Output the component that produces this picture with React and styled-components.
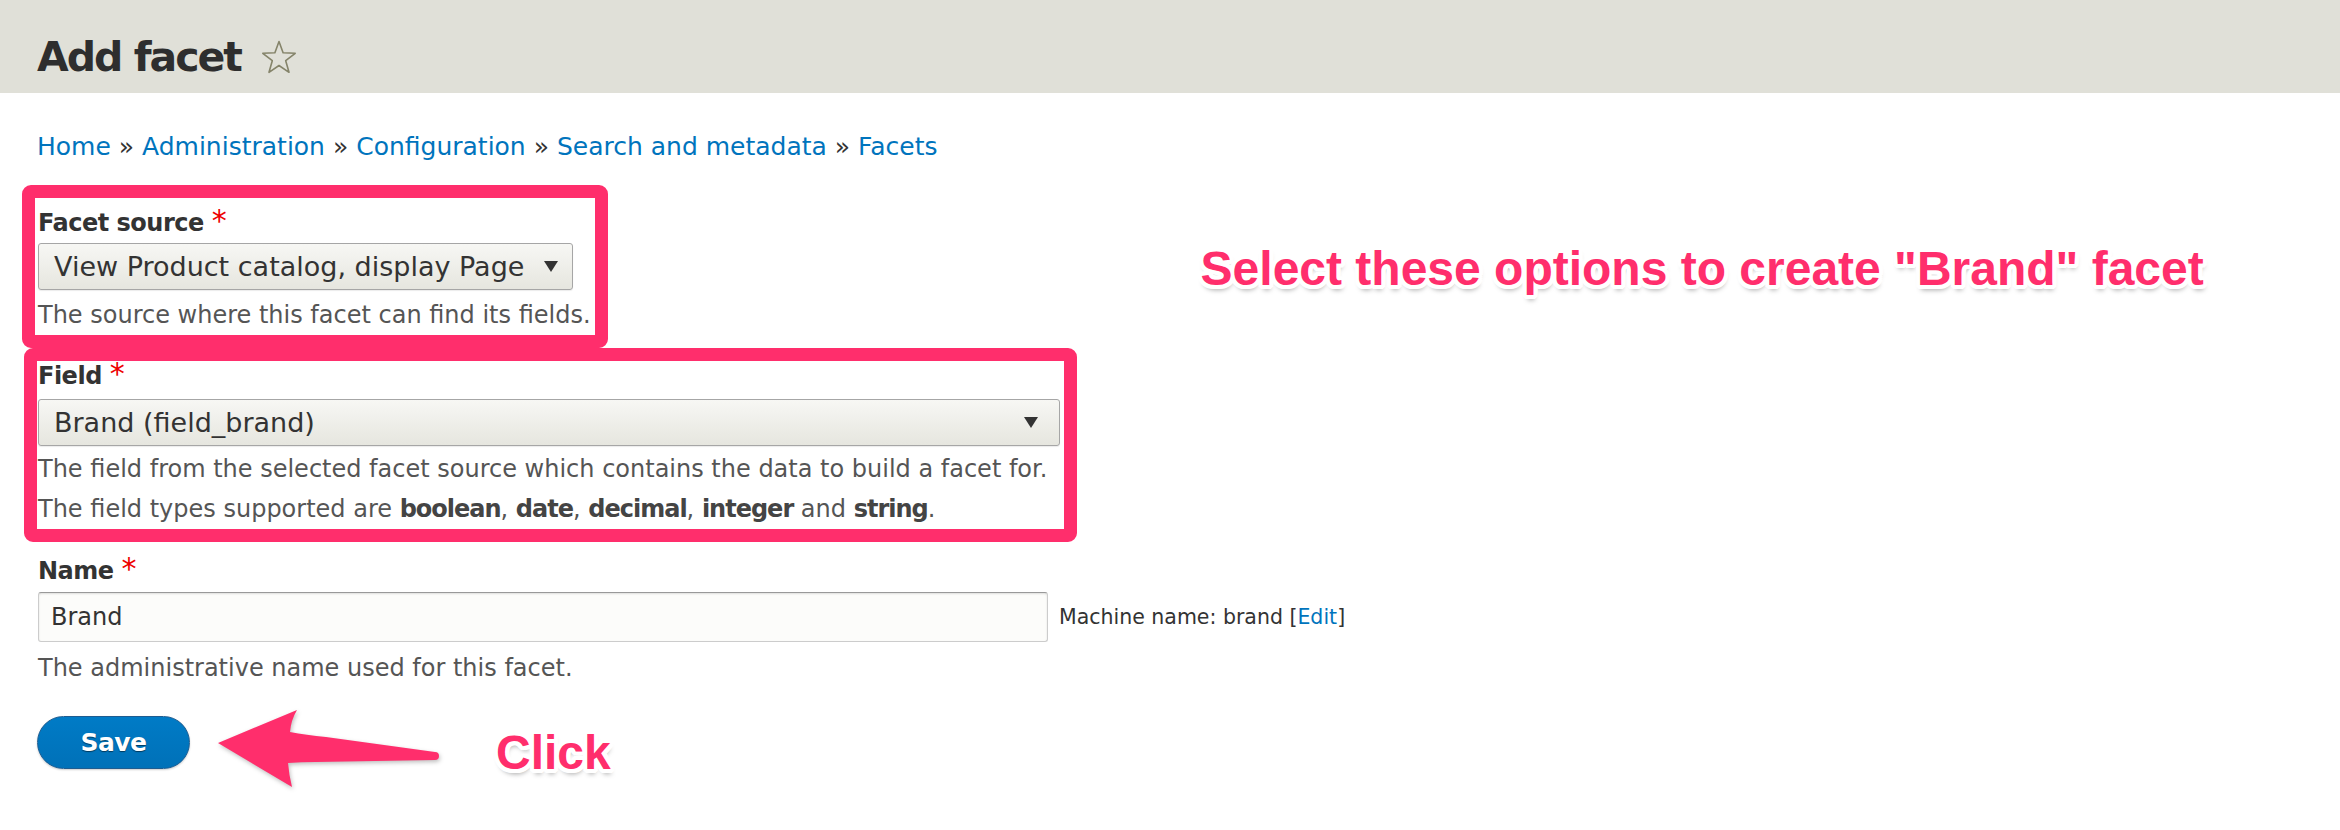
import React from "react";
import styled, { createGlobalStyle } from "styled-components";

const GlobalStyle = createGlobalStyle`
  html, body {
    margin: 0;
    padding: 0;
    background: #fff;
  }
  body {
    font-family: "DejaVu Sans", "Lucida Grande", sans-serif;
    font-size: 24px;
    color: #333;
    width: 2340px;
    height: 830px;
    overflow: hidden;
  }
`;

const PINK = "#ff2e6c";

const PageHeader = styled.header`
  height: 93px;
  box-sizing: border-box;
  padding: 20px 0 0 37px;
  background: #e0e0d8;
  display: flex;
  align-items: center;
  gap: 20px;
`;

const Title = styled.h1`
  margin: 0;
  font-size: 41px;
  line-height: 46px;
  font-weight: bold;
  letter-spacing: -2px;
  color: #2e2e2e;
`;

const Main = styled.main`
  padding-left: 22px;
`;

const Breadcrumb = styled.nav`
  margin: 34px 0 18px 15px;
  font-size: 25px;
  line-height: 40px;
  color: #333;

  a {
    color: #0074bd;
    text-decoration: none;
  }
`;

const TopRow = styled.div`
  display: flex;
  align-items: flex-start;
`;

const Highlight = styled.div`
  width: fit-content;
  border: 13px solid ${PINK};
  border-radius: 9px;
  padding: ${(p) => p.$pad};
  margin-left: ${(p) => p.$offset || 0}px;
`;

const Label = styled.label`
  display: block;
  font-weight: bold;
  line-height: 30px;
  letter-spacing: -0.5px;
  color: #333;
`;

const Required = styled.span`
  color: #e00;
  margin-left: 8px;
  font-size: 30px;
  font-weight: normal;
  letter-spacing: 0;
  vertical-align: top;
  line-height: 26px;
`;

const Select = styled.div`
  display: flex;
  align-items: center;
  justify-content: space-between;
  box-sizing: border-box;
  width: ${(p) => (p.$width ? `${p.$width}px` : "fit-content")};
  height: ${(p) => p.$height}px;
  margin-top: ${(p) => p.$gap}px;
  padding: 0 ${(p) => p.$right}px 0 15px;
  border: 1px solid #a6a6a6;
  border-radius: 3px;
  background: linear-gradient(#f7f7f4, #e6e6df);
  box-shadow: 0 1px 1px rgba(0, 0, 0, 0.08);
  font-size: 27px;
  color: #333;
  white-space: nowrap;
`;

const Caret = styled.span`
  width: 0;
  height: 0;
  margin-left: 20px;
  border-left: 7px solid transparent;
  border-right: 7px solid transparent;
  border-top: 11px solid #333;
`;

const Description = styled.div`
  margin-top: ${(p) => p.$gap}px;
  line-height: 40px;
  color: #555;

  strong {
    color: #444;
    letter-spacing: -1px;
  }
`;

const Annotation = styled.div`
  font-family: "Liberation Sans", Arial, sans-serif;
  font-weight: bold;
  font-size: ${(p) => p.$size}px;
  line-height: 56px;
  color: ${PINK};
  white-space: nowrap;
  margin: ${(p) => p.$margin};
  text-shadow:
    -4px 0 0 #fff, 4px 0 0 #fff, 0 -4px 0 #fff, 0 4px 0 #fff,
    -3px -3px 0 #fff, 3px -3px 0 #fff, -3px 3px 0 #fff, 3px 3px 0 #fff,
    -2px -4px 0 #fff, 2px -4px 0 #fff, -2px 4px 0 #fff, 2px 4px 0 #fff,
    -4px -2px 0 #fff, 4px -2px 0 #fff, -4px 2px 0 #fff, 4px 2px 0 #fff,
    1px 5px 5px rgba(0, 0, 0, 0.35);
`;

const FormItem = styled.div`
  margin: 14px 0 0 16px;
`;

const InputRow = styled.div`
  display: flex;
  align-items: center;
  margin-top: 6px;
`;

const TextInput = styled.input`
  box-sizing: border-box;
  width: 1010px;
  height: 50px;
  padding: 0 12px;
  border: 1px solid #ccc;
  border-top-color: #999;
  border-radius: 3px;
  background: #fcfcfa;
  box-shadow: inset 0 1px 2px rgba(0, 0, 0, 0.12);
  font-family: inherit;
  font-size: 24px;
  color: #333;
  outline: none;
`;

const MachineName = styled.span`
  margin-left: 11px;
  font-size: 20.5px;
  color: #333;

  a {
    color: #0074bd;
    text-decoration: none;
  }
`;

const Actions = styled.div`
  display: flex;
  align-items: flex-start;
  margin: 20px 0 0 15px;
`;

const SaveButton = styled.button`
  width: 153px;
  height: 53px;
  margin-top: 8px;
  border: 1px solid #1e5c90;
  border-radius: 30px;
  background: linear-gradient(#007bc6, #0071b8);
  color: #fff;
  font-family: inherit;
  font-size: 25px;
  font-weight: bold;
  letter-spacing: -0.5px;
  text-shadow: 0 1px 1px rgba(0, 0, 0, 0.5);
  box-shadow: 0 1px 2px rgba(0, 0, 0, 0.2);
  cursor: pointer;
`;

const ArrowIcon = styled.svg`
  margin-left: 26px;
  flex-shrink: 0;
  filter: drop-shadow(1px 2px 2px rgba(0, 0, 0, 0.25));
`;

const Star = () => (
  <svg width="36" height="36" viewBox="0 0 36 36">
    <polygon
      points="18,2.5 22.1,13.8 34.2,14.3 24.7,21.7 28,33.3 18,26.5 8,33.3 11.3,21.7 1.8,14.3 13.9,13.8"
      fill="none"
      stroke="#85846a"
      strokeWidth="1.6"
      strokeLinejoin="round"
    />
  </svg>
);

const Arrow = () => (
  <ArrowIcon width="226" height="82" viewBox="0 0 226 82">
    <path
      d="M2 35 L81 2 Q75 12 74 24 Q90 27 110 29 L219 44 A4 4 0 0 1 219 52 L100 54 Q85 54 72 55 Q73 67 76 79 Z"
      fill={PINK}
    />
  </ArrowIcon>
);

export default function App() {
  return (
    <>
      <GlobalStyle />
      <PageHeader>
        <Title>Add facet</Title>
        <Star />
      </PageHeader>
      <Main>
        <Breadcrumb>
          <a href="#">Home</a> » <a href="#">Administration</a> »{" "}
          <a href="#">Configuration</a> » <a href="#">Search and metadata</a> »{" "}
          <a href="#">Facets</a>
        </Breadcrumb>

        <TopRow>
          <Highlight $pad="10px 4px 0 3px">
            <Label>
              Facet source<Required>*</Required>
            </Label>
            <Select $height={47} $gap={5} $right={14}>
              View Product catalog, display Page
              <Caret />
            </Select>
            <Description $gap={5}>The source where this facet can find its fields.</Description>
          </Highlight>
          <Annotation $size={48} $margin="56px 0 0 593px">
            Select these options to create "Brand" facet
          </Annotation>
        </TopRow>

        <Highlight $pad="0 4px 0 1px" $offset={2}>
          <Label>
            Field<Required>*</Required>
          </Label>
          <Select $width={1022} $height={47} $gap={8} $right={21}>
            Brand (field_brand)
            <Caret />
          </Select>
          <Description $gap={3}>
            The field from the selected facet source which contains the data to build a facet for.
            <br />
            The field types supported are <strong>boolean</strong>, <strong>date</strong>,{" "}
            <strong>decimal</strong>, <strong>integer</strong> and <strong>string</strong>.
          </Description>
        </Highlight>

        <FormItem>
          <Label>
            Name<Required>*</Required>
          </Label>
          <InputRow>
            <TextInput defaultValue="Brand" />
            <MachineName>
              Machine name: brand [<a href="#">Edit</a>]
            </MachineName>
          </InputRow>
          <Description $gap={6}>The administrative name used for this facet.</Description>
        </FormItem>

        <Actions>
          <SaveButton>Save</SaveButton>
          <Arrow />
          <Annotation $size={48} $margin="17px 0 0 54px">
            Click
          </Annotation>
        </Actions>
      </Main>
    </>
  );
}
